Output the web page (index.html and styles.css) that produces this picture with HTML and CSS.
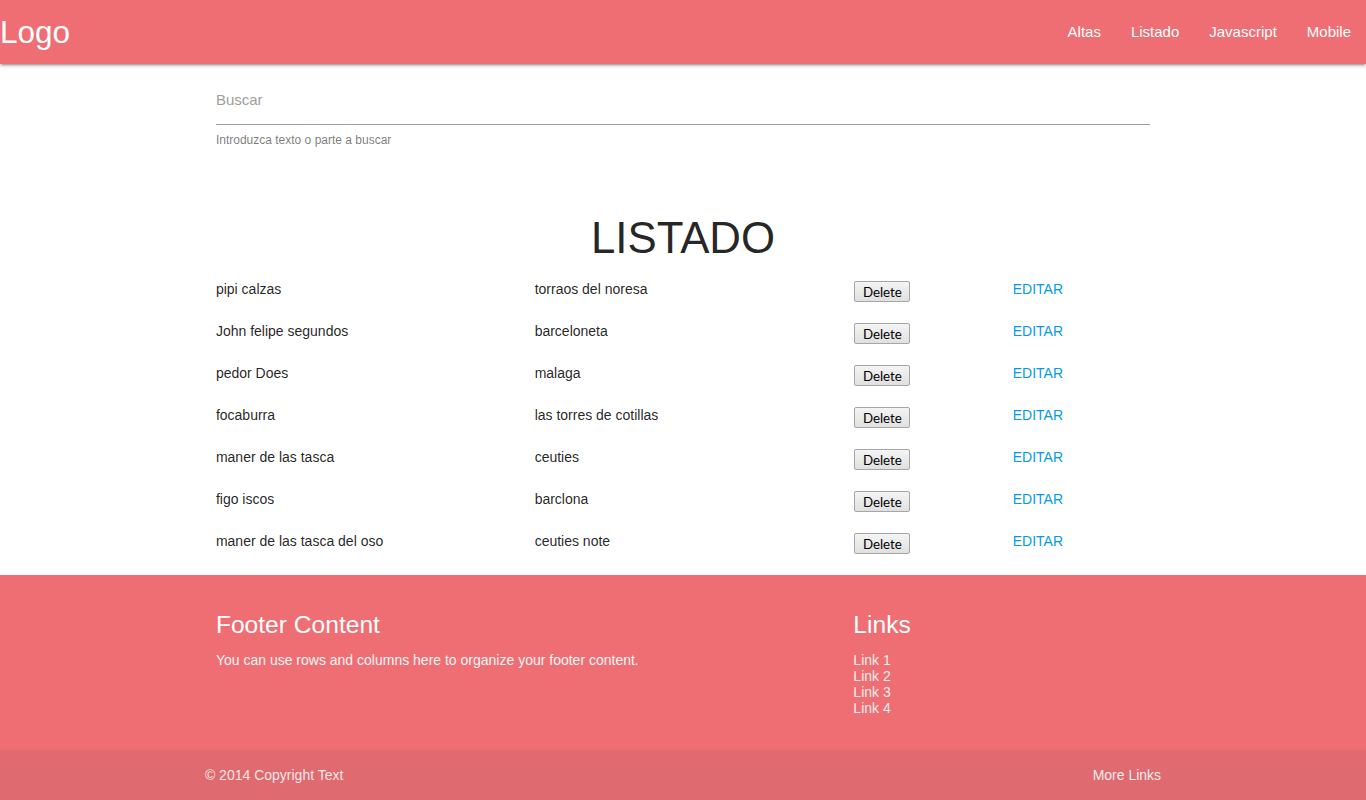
FILE: index.html
```html
<!DOCTYPE html>
<html lang="es">
<head>
<meta charset="utf-8">
<title>Listado</title>
<link rel="stylesheet" href="styles.css">
</head>
<body>
<nav class="nav">
  <a class="logo" href="#">Logo</a>
  <ul class="nav-links">
    <li><a href="#">Altas</a></li>
    <li><a href="#">Listado</a></li>
    <li><a href="#">Javascript</a></li>
    <li><a href="#">Mobile</a></li>
  </ul>
</nav>

<main class="container">
  <div class="search">
    <input class="search-input" type="text" placeholder="Buscar">
    <div class="helper">Introduzca texto o parte a buscar</div>
  </div>

  <h3 class="title">LISTADO</h3>

  <div class="list">
    <div class="row"><span>pipi calzas</span><span>torraos del noresa</span><span><button class="btn">Delete</button></span><span><a class="edit" href="#">EDITAR</a></span></div>
    <div class="row"><span>John felipe segundos</span><span>barceloneta</span><span><button class="btn">Delete</button></span><span><a class="edit" href="#">EDITAR</a></span></div>
    <div class="row"><span>pedor Does</span><span>malaga</span><span><button class="btn">Delete</button></span><span><a class="edit" href="#">EDITAR</a></span></div>
    <div class="row"><span>focaburra</span><span>las torres de cotillas</span><span><button class="btn">Delete</button></span><span><a class="edit" href="#">EDITAR</a></span></div>
    <div class="row"><span>maner de las tasca</span><span>ceuties</span><span><button class="btn">Delete</button></span><span><a class="edit" href="#">EDITAR</a></span></div>
    <div class="row"><span>figo iscos</span><span>barclona</span><span><button class="btn">Delete</button></span><span><a class="edit" href="#">EDITAR</a></span></div>
    <div class="row"><span>maner de las tasca del oso</span><span>ceuties note</span><span><button class="btn">Delete</button></span><span><a class="edit" href="#">EDITAR</a></span></div>
  </div>
</main>

<footer class="footer">
  <div class="container footer-grid">
    <div class="footer-col">
      <h5 class="footer-title">Footer Content</h5>
      <p class="footer-text">You can use rows and columns here to organize your footer content.</p>
    </div>
    <div class="footer-col">
      <h5 class="footer-title">Links</h5>
      <ul class="footer-links">
        <li><a href="#">Link 1</a></li>
        <li><a href="#">Link 2</a></li>
        <li><a href="#">Link 3</a></li>
        <li><a href="#">Link 4</a></li>
      </ul>
    </div>
  </div>
  <div class="copyright">
    <div class="container copyright-inner">
      <span>© 2014 Copyright Text</span>
      <a href="#">More Links</a>
    </div>
  </div>
</footer>
</body>
</html>
```

FILE: styles.css
```css
* { box-sizing: border-box; }

body {
  margin: 0;
  font-family: "Liberation Sans", Arial, sans-serif;
  font-size: 14px;
  line-height: 1.5;
  color: rgba(0, 0, 0, 0.87);
  background: #fff;
}

a { text-decoration: none; }

.nav {
  height: 64px;
  background: #ef6e73;
  display: flex;
  justify-content: space-between;
  align-items: center;
  box-shadow: 0 2px 2px 0 rgba(0,0,0,0.14), 0 3px 1px -2px rgba(0,0,0,0.12), 0 1px 5px 0 rgba(0,0,0,0.2);
  position: relative;
  z-index: 2;
}

.logo {
  color: #fff;
  font-size: 31.5px;
  line-height: 64px;
}

.nav-links {
  list-style: none;
  margin: 0;
  padding: 0;
  display: flex;
}

.nav-links a {
  display: block;
  padding: 0 15px;
  line-height: 64px;
  color: #fff;
  font-size: 15px;
}

.container {
  width: 70%;
  margin: 0 auto;
}

.search {
  padding: 15px 11px 0;
}

.search-input {
  display: block;
  width: 100%;
  height: 46px;
  margin: 0;
  padding: 0 0 4px;
  border: none;
  border-bottom: 1px solid #9e9e9e;
  outline: none;
  background: transparent;
  font-family: "Liberation Sans", Arial, sans-serif;
  font-size: 15px;
  color: rgba(0,0,0,0.87);
}

.search-input::placeholder { color: #9e9e9e; }

.helper {
  margin-top: 8px;
  font-size: 12px;
  line-height: 15px;
  color: rgba(0, 0, 0, 0.54);
}

.title {
  margin: 66px 0 16px;
  text-align: center;
  font-size: 43.8px;
  font-weight: 400;
  line-height: 48px;
}

.list {
  margin-bottom: 3px;
}

.row {
  display: grid;
  grid-template-columns: 2fr 2fr 1fr 1fr;
  height: 42px;
}

.row > span {
  padding: 0 11px;
  line-height: 22px;
}

.btn {
  display: block;
  width: 56px;
  height: 21px;
  margin: 3px 0 0 1px;
  padding: 0;
  border: 1px solid #a6a6a6;
  border-radius: 2px;
  background: linear-gradient(#f4f4f4, #e0e0e0);
  font-family: "Lato", "Liberation Sans", sans-serif;
  font-size: 13.3px;
  line-height: 18px;
  color: #000;
}

.edit {
  color: #039be5;
}

.footer {
  background: #ef6e73;
}

.footer-grid {
  display: grid;
  grid-template-columns: 2fr 1fr;
  height: 175px;
  padding-top: 20px;
}

.footer-col {
  padding: 0 11px;
}

.footer-title {
  margin: 16px 0 11px;
  font-size: 24.6px;
  font-weight: 400;
  line-height: 27px;
  color: #fff;
}

.footer-text {
  margin: 0;
  line-height: 22px;
  color: #f5f5f5;
}

.footer-links {
  list-style: none;
  margin: 0;
  padding: 0;
  padding-top: 3px;
}

.footer-links li {
  line-height: 16px;
}

.footer-links a {
  color: #eeeeee;
}

.copyright {
  background: #df6a6f;
  height: 50px;
}

.copyright-inner {
  height: 50px;
  display: flex;
  justify-content: space-between;
  align-items: center;
  color: rgba(255, 255, 255, 0.85);
}

.copyright-inner a {
  color: #eeeeee;
}
```
